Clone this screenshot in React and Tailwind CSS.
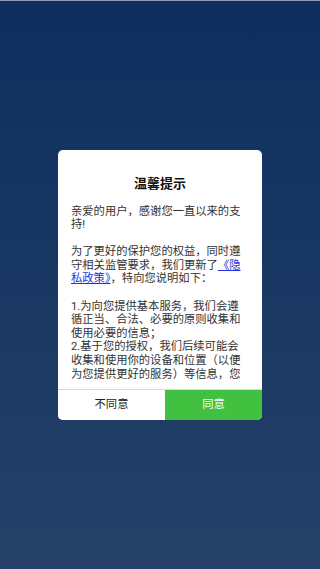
export default function App() {
  return (
    <div
      className="relative flex h-screen w-full items-center justify-center bg-linear-to-b from-[#0d2e5e] to-[#254168]"
      style={{ fontFamily: 'Roboto, "Noto Sans CJK SC", sans-serif' }}
    >
      {/* status bar edge */}
      <div className="absolute left-0 right-0 top-0 h-px bg-[#8e9bb0]" />

      <div className="flex w-[204px] flex-col overflow-hidden rounded-[5px] bg-white">
        <h2 className="pt-[26px] text-center text-[13px] leading-[16px] font-bold text-[#111]">
          温馨提示
        </h2>

        <div className="mt-[13px] mb-[7px] h-[177px] px-[13px] text-[11.3px] leading-[13.6px] text-[#333]">
          <p>亲爱的用户，感谢您一直以来的支持!</p>
          <p className="mt-[13.6px]">
            为了更好的保护您的权益，同时遵守相关监管要求，我们更新了
            <span className="text-[#2233dd] underline">《隐私政策》</span>
            ，特向您说明如下：
          </p>
          <p className="mt-[13.6px]">
            1.为向您提供基本服务，我们会遵循正当、合法、必要的原则收集和使用必要的信息；
          </p>
          <p>
            2.基于您的授权，我们后续可能会收集和使用你的设备和位置（以便为您提供更好的服务）等信息，您
          </p>
        </div>

        <div className="flex h-[31px] border-t border-[#d6d6d6] text-[11.3px] leading-none">
          <button className="flex w-[107px] items-center justify-center bg-white text-[#222]">
            不同意
          </button>
          <button className="flex flex-1 items-center justify-center bg-[#41c13f] text-white">
            同意
          </button>
        </div>
      </div>
    </div>
  );
}
